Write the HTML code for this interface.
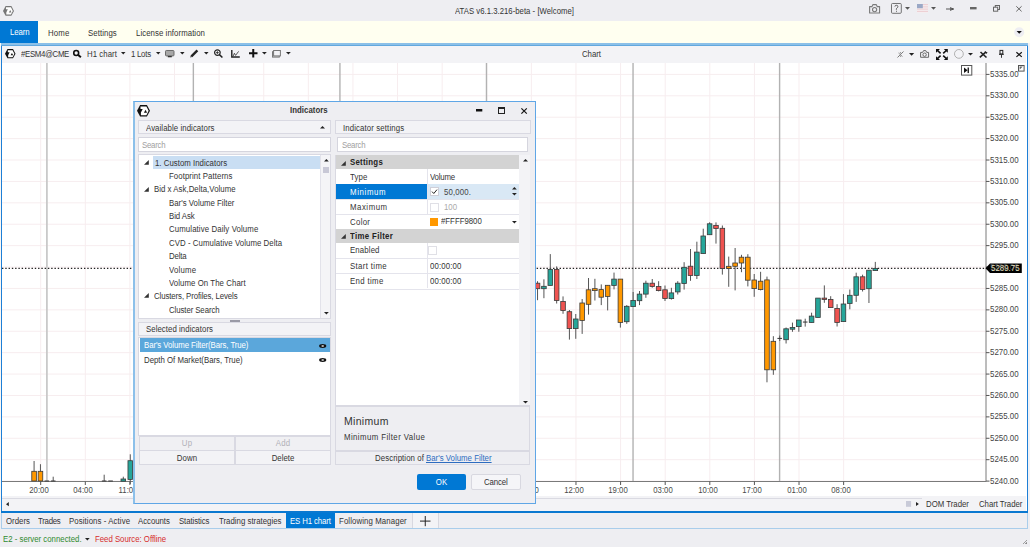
<!DOCTYPE html>
<html><head><meta charset="utf-8">
<style>
*{margin:0;padding:0;box-sizing:border-box}
html,body{width:1030px;height:547px;overflow:hidden;background:#EEEEF2;font-family:"Liberation Sans",sans-serif;font-size:8.5px;color:#333}
.a{position:absolute;white-space:nowrap}
svg.a{overflow:visible}
</style></head><body>
<div class="a" style="left:0px;top:0px;width:1030px;height:21px;background:#EEEEF2;"></div>
<div class="a" style="left:0px;top:21px;width:1030px;height:22px;background:#FFFFF0;"></div>
<div class="a" style="left:0px;top:21px;width:38px;height:22px;background:#0078D4;"></div>
<div class="a" style="left:0px;top:43px;width:1030px;height:470px;background:#FAF7F4;"></div>
<div class="a" style="left:1px;top:43px;width:1027px;height:1.5px;background:#8CC0E8;"></div>
<div class="a" style="left:1px;top:44.5px;width:1027px;height:1.5px;background:#62A8DE;"></div>
<div class="a" style="left:1028px;top:43px;width:2px;height:470px;background:#F2F2F5;"></div>
<div class="a" style="left:1px;top:46px;width:1027px;height:467px;background:#fff;border-left:1px solid #1E7FD6;border-right:1px solid #1E7FD6;"></div>
<div class="a" style="left:2px;top:46px;width:1024px;height:17px;background:#F3F3F6;"></div>
<svg class="a" style="left:0;top:0" width="1030" height="547" viewBox="0 0 1030 547"><line x1="2" y1="74.40" x2="986" y2="74.40" stroke="#F7EDEF" stroke-width="1"/><line x1="2" y1="95.81" x2="986" y2="95.81" stroke="#F7EDEF" stroke-width="1"/><line x1="2" y1="117.21" x2="986" y2="117.21" stroke="#F7EDEF" stroke-width="1"/><line x1="2" y1="138.62" x2="986" y2="138.62" stroke="#F7EDEF" stroke-width="1"/><line x1="2" y1="160.02" x2="986" y2="160.02" stroke="#F7EDEF" stroke-width="1"/><line x1="2" y1="181.43" x2="986" y2="181.43" stroke="#F7EDEF" stroke-width="1"/><line x1="2" y1="202.83" x2="986" y2="202.83" stroke="#F7EDEF" stroke-width="1"/><line x1="2" y1="224.24" x2="986" y2="224.24" stroke="#F7EDEF" stroke-width="1"/><line x1="2" y1="245.64" x2="986" y2="245.64" stroke="#F7EDEF" stroke-width="1"/><line x1="2" y1="267.05" x2="986" y2="267.05" stroke="#F7EDEF" stroke-width="1"/><line x1="2" y1="288.45" x2="986" y2="288.45" stroke="#F7EDEF" stroke-width="1"/><line x1="2" y1="309.86" x2="986" y2="309.86" stroke="#F7EDEF" stroke-width="1"/><line x1="2" y1="331.26" x2="986" y2="331.26" stroke="#F7EDEF" stroke-width="1"/><line x1="2" y1="352.66" x2="986" y2="352.66" stroke="#F7EDEF" stroke-width="1"/><line x1="2" y1="374.07" x2="986" y2="374.07" stroke="#F7EDEF" stroke-width="1"/><line x1="2" y1="395.48" x2="986" y2="395.48" stroke="#F7EDEF" stroke-width="1"/><line x1="2" y1="416.88" x2="986" y2="416.88" stroke="#F7EDEF" stroke-width="1"/><line x1="2" y1="438.28" x2="986" y2="438.28" stroke="#F7EDEF" stroke-width="1"/><line x1="2" y1="459.69" x2="986" y2="459.69" stroke="#F7EDEF" stroke-width="1"/><line x1="2" y1="481.10" x2="986" y2="481.10" stroke="#F7EDEF" stroke-width="1"/><line x1="40.70" y1="63" x2="40.70" y2="481.5" stroke="#F7EDEF" stroke-width="1"/><line x1="85.31" y1="63" x2="85.31" y2="481.5" stroke="#F7EDEF" stroke-width="1"/><line x1="129.91" y1="63" x2="129.91" y2="481.5" stroke="#F7EDEF" stroke-width="1"/><line x1="174.52" y1="63" x2="174.52" y2="481.5" stroke="#F7EDEF" stroke-width="1"/><line x1="219.13" y1="63" x2="219.13" y2="481.5" stroke="#F7EDEF" stroke-width="1"/><line x1="263.74" y1="63" x2="263.74" y2="481.5" stroke="#F7EDEF" stroke-width="1"/><line x1="308.34" y1="63" x2="308.34" y2="481.5" stroke="#F7EDEF" stroke-width="1"/><line x1="352.95" y1="63" x2="352.95" y2="481.5" stroke="#F7EDEF" stroke-width="1"/><line x1="397.56" y1="63" x2="397.56" y2="481.5" stroke="#F7EDEF" stroke-width="1"/><line x1="442.16" y1="63" x2="442.16" y2="481.5" stroke="#F7EDEF" stroke-width="1"/><line x1="486.77" y1="63" x2="486.77" y2="481.5" stroke="#F7EDEF" stroke-width="1"/><line x1="531.38" y1="63" x2="531.38" y2="481.5" stroke="#F7EDEF" stroke-width="1"/><line x1="575.98" y1="63" x2="575.98" y2="481.5" stroke="#F7EDEF" stroke-width="1"/><line x1="620.59" y1="63" x2="620.59" y2="481.5" stroke="#F7EDEF" stroke-width="1"/><line x1="665.20" y1="63" x2="665.20" y2="481.5" stroke="#F7EDEF" stroke-width="1"/><line x1="709.81" y1="63" x2="709.81" y2="481.5" stroke="#F7EDEF" stroke-width="1"/><line x1="754.41" y1="63" x2="754.41" y2="481.5" stroke="#F7EDEF" stroke-width="1"/><line x1="799.02" y1="63" x2="799.02" y2="481.5" stroke="#F7EDEF" stroke-width="1"/><line x1="843.63" y1="63" x2="843.63" y2="481.5" stroke="#F7EDEF" stroke-width="1"/><line x1="46.90" y1="63" x2="46.90" y2="481.5" stroke="#C9C9C9" stroke-width="1.8"/><line x1="193.36" y1="63" x2="193.36" y2="481.5" stroke="#B2B2B2" stroke-width="1.4"/><line x1="339.92" y1="63" x2="339.92" y2="481.5" stroke="#B2B2B2" stroke-width="1.4"/><line x1="486.48" y1="63" x2="486.48" y2="481.5" stroke="#B2B2B2" stroke-width="1.4"/><line x1="633.04" y1="63" x2="633.04" y2="481.5" stroke="#B2B2B2" stroke-width="1.4"/><line x1="779.60" y1="63" x2="779.60" y2="481.5" stroke="#B2B2B2" stroke-width="1.4"/><line x1="2" y1="481.5" x2="986" y2="481.5" stroke="#7A7A7A" stroke-width="1"/><line x1="986" y1="63" x2="986" y2="481.5" stroke="#7A7A7A" stroke-width="1"/><line x1="40.70" y1="481.5" x2="40.70" y2="485" stroke="#555" stroke-width="1"/><line x1="85.31" y1="481.5" x2="85.31" y2="485" stroke="#555" stroke-width="1"/><line x1="129.91" y1="481.5" x2="129.91" y2="485" stroke="#555" stroke-width="1"/><line x1="174.52" y1="481.5" x2="174.52" y2="485" stroke="#555" stroke-width="1"/><line x1="219.13" y1="481.5" x2="219.13" y2="485" stroke="#555" stroke-width="1"/><line x1="263.74" y1="481.5" x2="263.74" y2="485" stroke="#555" stroke-width="1"/><line x1="308.34" y1="481.5" x2="308.34" y2="485" stroke="#555" stroke-width="1"/><line x1="352.95" y1="481.5" x2="352.95" y2="485" stroke="#555" stroke-width="1"/><line x1="397.56" y1="481.5" x2="397.56" y2="485" stroke="#555" stroke-width="1"/><line x1="442.16" y1="481.5" x2="442.16" y2="485" stroke="#555" stroke-width="1"/><line x1="486.77" y1="481.5" x2="486.77" y2="485" stroke="#555" stroke-width="1"/><line x1="531.38" y1="481.5" x2="531.38" y2="485" stroke="#555" stroke-width="1"/><line x1="575.98" y1="481.5" x2="575.98" y2="485" stroke="#555" stroke-width="1"/><line x1="620.59" y1="481.5" x2="620.59" y2="485" stroke="#555" stroke-width="1"/><line x1="665.20" y1="481.5" x2="665.20" y2="485" stroke="#555" stroke-width="1"/><line x1="709.81" y1="481.5" x2="709.81" y2="485" stroke="#555" stroke-width="1"/><line x1="754.41" y1="481.5" x2="754.41" y2="485" stroke="#555" stroke-width="1"/><line x1="799.02" y1="481.5" x2="799.02" y2="485" stroke="#555" stroke-width="1"/><line x1="843.63" y1="481.5" x2="843.63" y2="485" stroke="#555" stroke-width="1"/><line x1="986" y1="74.40" x2="989.5" y2="74.40" stroke="#555" stroke-width="1"/><line x1="986" y1="95.81" x2="989.5" y2="95.81" stroke="#555" stroke-width="1"/><line x1="986" y1="117.21" x2="989.5" y2="117.21" stroke="#555" stroke-width="1"/><line x1="986" y1="138.62" x2="989.5" y2="138.62" stroke="#555" stroke-width="1"/><line x1="986" y1="160.02" x2="989.5" y2="160.02" stroke="#555" stroke-width="1"/><line x1="986" y1="181.43" x2="989.5" y2="181.43" stroke="#555" stroke-width="1"/><line x1="986" y1="202.83" x2="989.5" y2="202.83" stroke="#555" stroke-width="1"/><line x1="986" y1="224.24" x2="989.5" y2="224.24" stroke="#555" stroke-width="1"/><line x1="986" y1="245.64" x2="989.5" y2="245.64" stroke="#555" stroke-width="1"/><line x1="986" y1="267.05" x2="989.5" y2="267.05" stroke="#555" stroke-width="1"/><line x1="986" y1="288.45" x2="989.5" y2="288.45" stroke="#555" stroke-width="1"/><line x1="986" y1="309.86" x2="989.5" y2="309.86" stroke="#555" stroke-width="1"/><line x1="986" y1="331.26" x2="989.5" y2="331.26" stroke="#555" stroke-width="1"/><line x1="986" y1="352.66" x2="989.5" y2="352.66" stroke="#555" stroke-width="1"/><line x1="986" y1="374.07" x2="989.5" y2="374.07" stroke="#555" stroke-width="1"/><line x1="986" y1="395.48" x2="989.5" y2="395.48" stroke="#555" stroke-width="1"/><line x1="986" y1="416.88" x2="989.5" y2="416.88" stroke="#555" stroke-width="1"/><line x1="986" y1="438.28" x2="989.5" y2="438.28" stroke="#555" stroke-width="1"/><line x1="986" y1="459.69" x2="989.5" y2="459.69" stroke="#555" stroke-width="1"/><line x1="986" y1="481.10" x2="989.5" y2="481.10" stroke="#555" stroke-width="1"/><line x1="2" y1="268.3" x2="986" y2="268.3" stroke="#222" stroke-width="1.3" stroke-dasharray="1.4 1.88"/><line x1="34.08" y1="461" x2="34.08" y2="481" stroke="#555" stroke-width="1"/><rect x="31.78" y="471.3" width="4.6" height="9.70" fill="#FF9800" stroke="#3a3a3a" stroke-width="0.8"/><line x1="40.45" y1="464.2" x2="40.45" y2="481" stroke="#555" stroke-width="1"/><rect x="38.15" y="471.3" width="4.6" height="9.70" fill="#FF9800" stroke="#3a3a3a" stroke-width="0.8"/><line x1="46.82" y1="481" x2="46.82" y2="481" stroke="#555" stroke-width="1"/><line x1="44.52" y1="481.00" x2="49.12" y2="481.00" stroke="#333" stroke-width="1"/><line x1="53.20" y1="476.7" x2="53.20" y2="481" stroke="#555" stroke-width="1"/><line x1="50.90" y1="481.00" x2="55.50" y2="481.00" stroke="#333" stroke-width="1"/><line x1="104.18" y1="474.7" x2="104.18" y2="481" stroke="#555" stroke-width="1"/><line x1="101.88" y1="481.00" x2="106.48" y2="481.00" stroke="#333" stroke-width="1"/><line x1="110.55" y1="481" x2="110.55" y2="481" stroke="#555" stroke-width="1"/><line x1="108.25" y1="481.00" x2="112.85" y2="481.00" stroke="#333" stroke-width="1"/><line x1="123.30" y1="476.7" x2="123.30" y2="481" stroke="#555" stroke-width="1"/><rect x="121.00" y="479" width="4.6" height="2.20" fill="#26A69A" stroke="#3a3a3a" stroke-width="0.8"/><line x1="130.27" y1="454.3" x2="130.27" y2="484" stroke="#555" stroke-width="1"/><rect x="127.97" y="460.7" width="4.6" height="18.70" fill="#26A69A" stroke="#3a3a3a" stroke-width="0.8"/><line x1="537.54" y1="281.2" x2="537.54" y2="300.2" stroke="#555" stroke-width="1"/><rect x="535.24" y="283.2" width="4.6" height="5.50" fill="#EF5350" stroke="#3a3a3a" stroke-width="0.8"/><line x1="543.92" y1="279.3" x2="543.92" y2="298.2" stroke="#555" stroke-width="1"/><rect x="541.62" y="286.3" width="4.6" height="2.40" fill="#26A69A" stroke="#3a3a3a" stroke-width="0.8"/><line x1="550.29" y1="254.1" x2="550.29" y2="285.4" stroke="#555" stroke-width="1"/><rect x="547.99" y="269.4" width="4.6" height="16.00" fill="#26A69A" stroke="#3a3a3a" stroke-width="0.8"/><line x1="556.66" y1="266.4" x2="556.66" y2="303.5" stroke="#555" stroke-width="1"/><rect x="554.36" y="269.4" width="4.6" height="31.10" fill="#EF5350" stroke="#3a3a3a" stroke-width="0.8"/><line x1="563.04" y1="296.4" x2="563.04" y2="313.8" stroke="#555" stroke-width="1"/><rect x="560.74" y="301.5" width="4.6" height="9.00" fill="#EF5350" stroke="#3a3a3a" stroke-width="0.8"/><line x1="569.41" y1="310" x2="569.41" y2="339.6" stroke="#555" stroke-width="1"/><rect x="567.11" y="311.7" width="4.6" height="16.90" fill="#EF5350" stroke="#3a3a3a" stroke-width="0.8"/><line x1="575.78" y1="314" x2="575.78" y2="338.8" stroke="#555" stroke-width="1"/><rect x="573.48" y="319" width="4.6" height="9.60" fill="#26A69A" stroke="#3a3a3a" stroke-width="0.8"/><line x1="582.16" y1="299" x2="582.16" y2="333.9" stroke="#555" stroke-width="1"/><rect x="579.86" y="303" width="4.6" height="17.40" fill="#FF9800" stroke="#3a3a3a" stroke-width="0.8"/><line x1="588.53" y1="278" x2="588.53" y2="314.6" stroke="#555" stroke-width="1"/><rect x="586.23" y="289.8" width="4.6" height="14.50" fill="#FF9800" stroke="#3a3a3a" stroke-width="0.8"/><line x1="594.90" y1="278.8" x2="594.90" y2="300.5" stroke="#555" stroke-width="1"/><rect x="592.60" y="288.7" width="4.6" height="1.90" fill="#FF9800" stroke="#3a3a3a" stroke-width="0.8"/><line x1="601.27" y1="284.4" x2="601.27" y2="305.1" stroke="#555" stroke-width="1"/><rect x="598.97" y="289.6" width="4.6" height="7.60" fill="#FF9800" stroke="#3a3a3a" stroke-width="0.8"/><line x1="607.65" y1="285.2" x2="607.65" y2="310.4" stroke="#555" stroke-width="1"/><rect x="605.35" y="285.3" width="4.6" height="11.10" fill="#FF9800" stroke="#3a3a3a" stroke-width="0.8"/><line x1="614.02" y1="272.6" x2="614.02" y2="289.4" stroke="#555" stroke-width="1"/><rect x="611.72" y="279.1" width="4.6" height="6.30" fill="#26A69A" stroke="#3a3a3a" stroke-width="0.8"/><line x1="620.39" y1="279.1" x2="620.39" y2="327.6" stroke="#555" stroke-width="1"/><rect x="618.09" y="279.1" width="4.6" height="43.30" fill="#FF9800" stroke="#3a3a3a" stroke-width="0.8"/><line x1="626.77" y1="305.1" x2="626.77" y2="323.8" stroke="#555" stroke-width="1"/><rect x="624.47" y="306.3" width="4.6" height="15.40" fill="#26A69A" stroke="#3a3a3a" stroke-width="0.8"/><line x1="633.14" y1="292" x2="633.14" y2="306.6" stroke="#555" stroke-width="1"/><rect x="630.84" y="300.4" width="4.6" height="6.20" fill="#26A69A" stroke="#3a3a3a" stroke-width="0.8"/><line x1="639.51" y1="291" x2="639.51" y2="305.1" stroke="#555" stroke-width="1"/><rect x="637.21" y="294.1" width="4.6" height="6.60" fill="#26A69A" stroke="#3a3a3a" stroke-width="0.8"/><line x1="645.89" y1="280.7" x2="645.89" y2="297.8" stroke="#555" stroke-width="1"/><rect x="643.59" y="283.2" width="4.6" height="10.90" fill="#26A69A" stroke="#3a3a3a" stroke-width="0.8"/><line x1="652.26" y1="279" x2="652.26" y2="287.7" stroke="#555" stroke-width="1"/><rect x="649.96" y="283.2" width="4.6" height="3.30" fill="#EF5350" stroke="#3a3a3a" stroke-width="0.8"/><line x1="658.63" y1="281.2" x2="658.63" y2="291.4" stroke="#555" stroke-width="1"/><rect x="656.33" y="286.5" width="4.6" height="4.10" fill="#EF5350" stroke="#3a3a3a" stroke-width="0.8"/><line x1="665.00" y1="285.5" x2="665.00" y2="301" stroke="#555" stroke-width="1"/><rect x="662.70" y="289.8" width="4.6" height="8.80" fill="#EF5350" stroke="#3a3a3a" stroke-width="0.8"/><line x1="671.38" y1="287.8" x2="671.38" y2="299.6" stroke="#555" stroke-width="1"/><rect x="669.08" y="292.9" width="4.6" height="5.70" fill="#26A69A" stroke="#3a3a3a" stroke-width="0.8"/><line x1="677.75" y1="281.2" x2="677.75" y2="294.5" stroke="#555" stroke-width="1"/><rect x="675.45" y="283.2" width="4.6" height="8.70" fill="#26A69A" stroke="#3a3a3a" stroke-width="0.8"/><line x1="684.12" y1="262.2" x2="684.12" y2="289.6" stroke="#555" stroke-width="1"/><rect x="681.82" y="267.3" width="4.6" height="16.20" fill="#26A69A" stroke="#3a3a3a" stroke-width="0.8"/><line x1="690.50" y1="249" x2="690.50" y2="280.8" stroke="#555" stroke-width="1"/><rect x="688.20" y="266.2" width="4.6" height="9.30" fill="#EF5350" stroke="#3a3a3a" stroke-width="0.8"/><line x1="696.87" y1="241.7" x2="696.87" y2="279" stroke="#555" stroke-width="1"/><rect x="694.57" y="252.1" width="4.6" height="23.40" fill="#26A69A" stroke="#3a3a3a" stroke-width="0.8"/><line x1="703.24" y1="228.7" x2="703.24" y2="253.6" stroke="#555" stroke-width="1"/><rect x="700.94" y="236" width="4.6" height="17.60" fill="#26A69A" stroke="#3a3a3a" stroke-width="0.8"/><line x1="709.62" y1="222.3" x2="709.62" y2="234.7" stroke="#555" stroke-width="1"/><rect x="707.32" y="223.8" width="4.6" height="10.90" fill="#26A69A" stroke="#3a3a3a" stroke-width="0.8"/><line x1="715.99" y1="222.4" x2="715.99" y2="243.6" stroke="#555" stroke-width="1"/><rect x="713.69" y="225.5" width="4.6" height="3.00" fill="#EF5350" stroke="#3a3a3a" stroke-width="0.8"/><line x1="722.36" y1="225.5" x2="722.36" y2="274.6" stroke="#555" stroke-width="1"/><rect x="720.06" y="228.3" width="4.6" height="40.20" fill="#EF5350" stroke="#3a3a3a" stroke-width="0.8"/><line x1="728.73" y1="256.6" x2="728.73" y2="286.8" stroke="#555" stroke-width="1"/><rect x="726.43" y="266.3" width="4.6" height="2.20" fill="#FF9800" stroke="#3a3a3a" stroke-width="0.8"/><line x1="735.11" y1="248" x2="735.11" y2="290.4" stroke="#555" stroke-width="1"/><rect x="732.81" y="263" width="4.6" height="3.30" fill="#FF9800" stroke="#3a3a3a" stroke-width="0.8"/><line x1="741.48" y1="254.8" x2="741.48" y2="272.2" stroke="#555" stroke-width="1"/><rect x="739.18" y="257.2" width="4.6" height="5.80" fill="#FF9800" stroke="#3a3a3a" stroke-width="0.8"/><line x1="747.85" y1="254.2" x2="747.85" y2="286.4" stroke="#555" stroke-width="1"/><rect x="745.55" y="257.2" width="4.6" height="23.00" fill="#FF9800" stroke="#3a3a3a" stroke-width="0.8"/><line x1="754.23" y1="274" x2="754.23" y2="296.8" stroke="#555" stroke-width="1"/><rect x="751.93" y="280" width="4.6" height="8.60" fill="#FF9800" stroke="#3a3a3a" stroke-width="0.8"/><line x1="760.60" y1="271.8" x2="760.60" y2="290.4" stroke="#555" stroke-width="1"/><rect x="758.30" y="281.2" width="4.6" height="8.40" fill="#FF9800" stroke="#3a3a3a" stroke-width="0.8"/><line x1="766.97" y1="276.6" x2="766.97" y2="382.3" stroke="#555" stroke-width="1"/><rect x="764.67" y="279.9" width="4.6" height="89.90" fill="#FF9800" stroke="#3a3a3a" stroke-width="0.8"/><line x1="773.35" y1="336.2" x2="773.35" y2="374.8" stroke="#555" stroke-width="1"/><rect x="771.05" y="341.3" width="4.6" height="28.50" fill="#FF9800" stroke="#3a3a3a" stroke-width="0.8"/><line x1="779.72" y1="335.5" x2="779.72" y2="341" stroke="#555" stroke-width="1"/><line x1="777.42" y1="338.40" x2="782.02" y2="338.40" stroke="#333" stroke-width="1"/><line x1="786.09" y1="327.5" x2="786.09" y2="343.5" stroke="#555" stroke-width="1"/><rect x="783.79" y="328.8" width="4.6" height="10.90" fill="#26A69A" stroke="#3a3a3a" stroke-width="0.8"/><line x1="792.46" y1="322.6" x2="792.46" y2="331.8" stroke="#555" stroke-width="1"/><rect x="790.16" y="327.5" width="4.6" height="1.70" fill="#26A69A" stroke="#3a3a3a" stroke-width="0.8"/><line x1="798.84" y1="320" x2="798.84" y2="331.8" stroke="#555" stroke-width="1"/><rect x="796.54" y="320" width="4.6" height="6.60" fill="#26A69A" stroke="#3a3a3a" stroke-width="0.8"/><line x1="805.21" y1="318.7" x2="805.21" y2="326.6" stroke="#555" stroke-width="1"/><line x1="802.91" y1="322.05" x2="807.51" y2="322.05" stroke="#333" stroke-width="1"/><line x1="811.58" y1="312.7" x2="811.58" y2="322.5" stroke="#555" stroke-width="1"/><rect x="809.28" y="316.1" width="4.6" height="6.40" fill="#26A69A" stroke="#3a3a3a" stroke-width="0.8"/><line x1="817.96" y1="298.1" x2="817.96" y2="317.4" stroke="#555" stroke-width="1"/><rect x="815.66" y="298.1" width="4.6" height="19.30" fill="#26A69A" stroke="#3a3a3a" stroke-width="0.8"/><line x1="824.33" y1="285.4" x2="824.33" y2="302.8" stroke="#555" stroke-width="1"/><rect x="822.03" y="298.1" width="4.6" height="1.30" fill="#EF5350" stroke="#3a3a3a" stroke-width="0.8"/><line x1="830.70" y1="296.2" x2="830.70" y2="307.6" stroke="#555" stroke-width="1"/><rect x="828.40" y="299.4" width="4.6" height="8.20" fill="#EF5350" stroke="#3a3a3a" stroke-width="0.8"/><line x1="837.08" y1="304.2" x2="837.08" y2="326.5" stroke="#555" stroke-width="1"/><rect x="834.78" y="308.4" width="4.6" height="14.00" fill="#EF5350" stroke="#3a3a3a" stroke-width="0.8"/><line x1="843.45" y1="294.1" x2="843.45" y2="321.6" stroke="#555" stroke-width="1"/><rect x="841.15" y="304" width="4.6" height="17.60" fill="#26A69A" stroke="#3a3a3a" stroke-width="0.8"/><line x1="849.82" y1="289.5" x2="849.82" y2="309.3" stroke="#555" stroke-width="1"/><rect x="847.52" y="295.3" width="4.6" height="8.20" fill="#26A69A" stroke="#3a3a3a" stroke-width="0.8"/><line x1="856.19" y1="272.7" x2="856.19" y2="301.9" stroke="#555" stroke-width="1"/><rect x="853.89" y="276.8" width="4.6" height="18.50" fill="#26A69A" stroke="#3a3a3a" stroke-width="0.8"/><line x1="862.57" y1="274.7" x2="862.57" y2="291.5" stroke="#555" stroke-width="1"/><rect x="860.27" y="276.8" width="4.6" height="12.70" fill="#EF5350" stroke="#3a3a3a" stroke-width="0.8"/><line x1="868.94" y1="270.2" x2="868.94" y2="303" stroke="#555" stroke-width="1"/><rect x="866.64" y="270.2" width="4.6" height="18.50" fill="#26A69A" stroke="#3a3a3a" stroke-width="0.8"/><line x1="875.31" y1="261.9" x2="875.31" y2="270.6" stroke="#555" stroke-width="1"/><rect x="873.01" y="268.4" width="4.6" height="2.20" fill="#26A69A" stroke="#3a3a3a" stroke-width="0.8"/><path d="M985.5 268.2 L990 263.6 H1021.8 V272.9 H990 Z" fill="#000"/></svg>
<div class="a" style="left:2px;top:495.5px;width:1024px;height:15.5px;background:#F3F3F6;"></div>
<div class="a" style="left:2px;top:498px;width:920px;height:1px;background:#DADAE2;"></div>
<div class="a" style="left:1px;top:511px;width:1027px;height:2px;background:#0A78D0;"></div>
<div class="a" style="left:1px;top:513px;width:1027px;height:16px;background:#EEEEF2;border-left:1px solid #A9CDEB;border-right:1px solid #A9CDEB;border-bottom:1.5px solid #A9CDEB;"></div>
<div class="a" style="left:286px;top:513px;width:49px;height:15px;background:#0078D4;"></div>
<div class="a" style="left:412px;top:513px;width:27px;height:15px;background:#F3F3F6;border-left:1px solid #D8D8E0;border-right:1px solid #D8D8E0;"></div>
<div class="a" style="left:0px;top:529px;width:1030px;height:18px;background:#EEEEF2;"></div>
<div class="a" style="left:455.30px;top:6.99px;font-size:8.4px;line-height:8.4px;letter-spacing:0.042px;color:#333;transform:scaleX(0.92);transform-origin:0 0;">ATAS v6.1.3.216-beta - [Welcome]</div>
<div class="a" style="left:9.60px;top:27.70px;font-size:8.5px;line-height:8.5px;letter-spacing:-0.133px;color:#fff;transform:scaleX(0.92);transform-origin:0 0;">Learn</div>
<div class="a" style="left:48.00px;top:28.80px;font-size:8.5px;line-height:8.5px;letter-spacing:0.143px;color:#333;transform:scaleX(0.92);transform-origin:0 0;">Home</div>
<div class="a" style="left:87.90px;top:28.80px;font-size:8.5px;line-height:8.5px;letter-spacing:0.073px;color:#333;transform:scaleX(0.92);transform-origin:0 0;">Settings</div>
<div class="a" style="left:135.60px;top:28.80px;font-size:8.5px;line-height:8.5px;letter-spacing:0.067px;color:#333;transform:scaleX(0.92);transform-origin:0 0;">License information</div>
<div class="a" style="left:21.10px;top:49.90px;font-size:8.5px;line-height:8.5px;letter-spacing:-0.359px;color:#333;transform:scaleX(0.92);transform-origin:0 0;">#ESM4@CME</div>
<div class="a" style="left:86.60px;top:49.90px;font-size:8.5px;line-height:8.5px;letter-spacing:0.060px;color:#333;transform:scaleX(0.92);transform-origin:0 0;">H1 chart</div>
<div class="a" style="left:131.00px;top:49.90px;font-size:8.5px;line-height:8.5px;letter-spacing:-0.272px;color:#333;transform:scaleX(0.92);transform-origin:0 0;">1 Lots</div>
<div class="a" style="left:582.00px;top:49.90px;font-size:8.5px;line-height:8.5px;letter-spacing:-0.051px;color:#333;transform:scaleX(0.92);transform-origin:0 0;">Chart</div>
<div class="a" style="left:989.60px;top:69.98px;font-size:9px;line-height:9px;letter-spacing:0.000px;color:#444;transform:scaleX(0.88);transform-origin:0 0;">5335.00</div>
<div class="a" style="left:989.60px;top:91.39px;font-size:9px;line-height:9px;letter-spacing:0.000px;color:#444;transform:scaleX(0.88);transform-origin:0 0;">5330.00</div>
<div class="a" style="left:989.60px;top:112.79px;font-size:9px;line-height:9px;letter-spacing:0.000px;color:#444;transform:scaleX(0.88);transform-origin:0 0;">5325.00</div>
<div class="a" style="left:989.60px;top:134.20px;font-size:9px;line-height:9px;letter-spacing:0.000px;color:#444;transform:scaleX(0.88);transform-origin:0 0;">5320.00</div>
<div class="a" style="left:989.60px;top:155.60px;font-size:9px;line-height:9px;letter-spacing:0.000px;color:#444;transform:scaleX(0.88);transform-origin:0 0;">5315.00</div>
<div class="a" style="left:989.60px;top:177.01px;font-size:9px;line-height:9px;letter-spacing:0.000px;color:#444;transform:scaleX(0.88);transform-origin:0 0;">5310.00</div>
<div class="a" style="left:989.60px;top:198.41px;font-size:9px;line-height:9px;letter-spacing:0.000px;color:#444;transform:scaleX(0.88);transform-origin:0 0;">5305.00</div>
<div class="a" style="left:989.60px;top:219.82px;font-size:9px;line-height:9px;letter-spacing:0.000px;color:#444;transform:scaleX(0.88);transform-origin:0 0;">5300.00</div>
<div class="a" style="left:989.60px;top:241.22px;font-size:9px;line-height:9px;letter-spacing:0.000px;color:#444;transform:scaleX(0.88);transform-origin:0 0;">5295.00</div>
<div class="a" style="left:989.60px;top:262.63px;font-size:9px;line-height:9px;letter-spacing:0.000px;color:#444;transform:scaleX(0.88);transform-origin:0 0;">5290.00</div>
<div class="a" style="left:989.60px;top:284.03px;font-size:9px;line-height:9px;letter-spacing:0.000px;color:#444;transform:scaleX(0.88);transform-origin:0 0;">5285.00</div>
<div class="a" style="left:989.60px;top:305.44px;font-size:9px;line-height:9px;letter-spacing:0.000px;color:#444;transform:scaleX(0.88);transform-origin:0 0;">5280.00</div>
<div class="a" style="left:989.60px;top:326.84px;font-size:9px;line-height:9px;letter-spacing:0.000px;color:#444;transform:scaleX(0.88);transform-origin:0 0;">5275.00</div>
<div class="a" style="left:989.60px;top:348.25px;font-size:9px;line-height:9px;letter-spacing:0.000px;color:#444;transform:scaleX(0.88);transform-origin:0 0;">5270.00</div>
<div class="a" style="left:989.60px;top:369.65px;font-size:9px;line-height:9px;letter-spacing:0.000px;color:#444;transform:scaleX(0.88);transform-origin:0 0;">5265.00</div>
<div class="a" style="left:989.60px;top:391.06px;font-size:9px;line-height:9px;letter-spacing:0.000px;color:#444;transform:scaleX(0.88);transform-origin:0 0;">5260.00</div>
<div class="a" style="left:989.60px;top:412.46px;font-size:9px;line-height:9px;letter-spacing:0.000px;color:#444;transform:scaleX(0.88);transform-origin:0 0;">5255.00</div>
<div class="a" style="left:989.60px;top:433.87px;font-size:9px;line-height:9px;letter-spacing:0.000px;color:#444;transform:scaleX(0.88);transform-origin:0 0;">5250.00</div>
<div class="a" style="left:989.60px;top:455.27px;font-size:9px;line-height:9px;letter-spacing:0.000px;color:#444;transform:scaleX(0.88);transform-origin:0 0;">5245.00</div>
<div class="a" style="left:989.60px;top:476.68px;font-size:9px;line-height:9px;letter-spacing:0.000px;color:#444;transform:scaleX(0.88);transform-origin:0 0;">5240.00</div>
<div class="a" style="left:991.20px;top:263.88px;font-size:9px;line-height:9px;letter-spacing:0.000px;color:#E8E4C4;transform:scaleX(0.88);transform-origin:0 0;">5289.75</div>
<div class="a" style="left:18.55px;top:485.58px;font-size:9px;line-height:9px;letter-spacing:0.000px;color:#4a4a4a;width:40px;text-align:center;transform:scaleX(0.86);">20:00</div>
<div class="a" style="left:63.16px;top:485.58px;font-size:9px;line-height:9px;letter-spacing:0.000px;color:#4a4a4a;width:40px;text-align:center;transform:scaleX(0.86);">04:00</div>
<div class="a" style="left:107.76px;top:485.58px;font-size:9px;line-height:9px;letter-spacing:0.000px;color:#4a4a4a;width:40px;text-align:center;transform:scaleX(0.86);">11:00</div>
<div class="a" style="left:553.83px;top:485.58px;font-size:9px;line-height:9px;letter-spacing:0.000px;color:#4a4a4a;width:40px;text-align:center;transform:scaleX(0.86);">12:00</div>
<div class="a" style="left:598.44px;top:485.58px;font-size:9px;line-height:9px;letter-spacing:0.000px;color:#4a4a4a;width:40px;text-align:center;transform:scaleX(0.86);">19:00</div>
<div class="a" style="left:643.05px;top:485.58px;font-size:9px;line-height:9px;letter-spacing:0.000px;color:#4a4a4a;width:40px;text-align:center;transform:scaleX(0.86);">03:00</div>
<div class="a" style="left:687.66px;top:485.58px;font-size:9px;line-height:9px;letter-spacing:0.000px;color:#4a4a4a;width:40px;text-align:center;transform:scaleX(0.86);">10:00</div>
<div class="a" style="left:732.26px;top:485.58px;font-size:9px;line-height:9px;letter-spacing:0.000px;color:#4a4a4a;width:40px;text-align:center;transform:scaleX(0.86);">17:00</div>
<div class="a" style="left:776.87px;top:485.58px;font-size:9px;line-height:9px;letter-spacing:0.000px;color:#4a4a4a;width:40px;text-align:center;transform:scaleX(0.86);">01:00</div>
<div class="a" style="left:821.48px;top:485.58px;font-size:9px;line-height:9px;letter-spacing:0.000px;color:#4a4a4a;width:40px;text-align:center;transform:scaleX(0.86);">08:00</div>
<div class="a" style="left:509.15px;top:485.58px;font-size:9px;line-height:9px;letter-spacing:0.000px;color:#4a4a4a;width:40px;text-align:center;transform:scaleX(0.86);">18:00</div>
<div class="a" style="left:925.90px;top:499.50px;font-size:8.5px;line-height:8.5px;letter-spacing:-0.014px;color:#333;transform:scaleX(0.92);transform-origin:0 0;">DOM Trader</div>
<div class="a" style="left:978.70px;top:499.50px;font-size:8.5px;line-height:8.5px;letter-spacing:-0.054px;color:#333;transform:scaleX(0.92);transform-origin:0 0;">Chart Trader</div>
<div class="a" style="left:6.00px;top:517.00px;font-size:8.5px;line-height:8.5px;letter-spacing:0.017px;color:#333;transform:scaleX(0.92);transform-origin:0 0;">Orders</div>
<div class="a" style="left:38.40px;top:517.00px;font-size:8.5px;line-height:8.5px;letter-spacing:-0.281px;color:#333;transform:scaleX(0.92);transform-origin:0 0;">Trades</div>
<div class="a" style="left:68.80px;top:517.00px;font-size:8.5px;line-height:8.5px;letter-spacing:0.093px;color:#333;transform:scaleX(0.92);transform-origin:0 0;">Positions - Active</div>
<div class="a" style="left:138.40px;top:517.00px;font-size:8.5px;line-height:8.5px;letter-spacing:-0.050px;color:#333;transform:scaleX(0.92);transform-origin:0 0;">Accounts</div>
<div class="a" style="left:179.00px;top:517.00px;font-size:8.5px;line-height:8.5px;letter-spacing:-0.108px;color:#333;transform:scaleX(0.92);transform-origin:0 0;">Statistics</div>
<div class="a" style="left:218.60px;top:517.00px;font-size:8.5px;line-height:8.5px;letter-spacing:0.012px;color:#333;transform:scaleX(0.92);transform-origin:0 0;">Trading strategies</div>
<div class="a" style="left:339.10px;top:517.00px;font-size:8.5px;line-height:8.5px;letter-spacing:0.110px;color:#333;transform:scaleX(0.92);transform-origin:0 0;">Following Manager</div>
<div class="a" style="left:289.70px;top:517.00px;font-size:8.5px;line-height:8.5px;letter-spacing:-0.135px;color:#fff;transform:scaleX(0.92);transform-origin:0 0;">ES H1 chart</div>
<div class="a" style="left:2.60px;top:534.50px;font-size:8.5px;line-height:8.5px;letter-spacing:-0.004px;color:#2F8A2F;transform:scaleX(0.92);transform-origin:0 0;">E2 - server connected.</div>
<div class="a" style="left:95.00px;top:534.50px;font-size:8.5px;line-height:8.5px;letter-spacing:-0.021px;color:#D62C2C;transform:scaleX(0.92);transform-origin:0 0;">Feed Source: Offline</div>
<div class="a" style="left:133px;top:101px;width:403px;height:402.8px;background:#EEEEF2;border:1px solid #5FA6E6;border-left:2px solid #8CC0EA;"></div>
<div class="a" style="left:290.00px;top:106.30px;font-size:8.5px;line-height:8.5px;letter-spacing:0.035px;color:#333;font-weight:700;transform:scaleX(0.92);transform-origin:0 0;">Indicators</div>
<div class="a" style="left:138px;top:120px;width:193px;height:14px;background:#F3F3F6;border:1px solid #D9D9E2;"></div>
<div class="a" style="left:146.40px;top:123.50px;font-size:8.5px;line-height:8.5px;letter-spacing:0.074px;color:#333;transform:scaleX(0.92);transform-origin:0 0;">Available indicators</div>
<div class="a" style="left:138px;top:137px;width:193px;height:15px;background:#fff;border:1px solid #D5D5DE;"></div>
<div class="a" style="left:142.20px;top:140.60px;font-size:8.5px;line-height:8.5px;letter-spacing:-0.250px;color:#A0A0A0;transform:scaleX(0.92);transform-origin:0 0;">Search</div>
<div class="a" style="left:138px;top:154px;width:193px;height:164.5px;background:#fff;border:1px solid #D9D9E2;"></div>
<div class="a" style="left:153px;top:155.8px;width:167px;height:13px;background:#C9DEF3;"></div>
<div class="a" style="left:320px;top:155px;width:10px;height:162.5px;background:#F4F4F7;border-left:1px solid #E2E2EA;"></div>
<div class="a" style="left:323.4px;top:167.1px;width:5.8px;height:5.8px;background:#C8C8D6;"></div>
<div class="a" style="left:155.00px;top:158.70px;font-size:8.5px;line-height:8.5px;letter-spacing:0.021px;color:#333;transform:scaleX(0.92);transform-origin:0 0;">1. Custom Indicators</div>
<svg class="a" style="left:144px;top:159.9px" width="5" height="5"><path d="M4.8 0 V4.8 H0 Z" fill="#333"/></svg>
<div class="a" style="left:168.60px;top:172.05px;font-size:8.5px;line-height:8.5px;letter-spacing:0.081px;color:#333;transform:scaleX(0.92);transform-origin:0 0;">Footprint Patterns</div>
<div class="a" style="left:154.40px;top:185.40px;font-size:8.5px;line-height:8.5px;letter-spacing:0.037px;color:#333;transform:scaleX(0.92);transform-origin:0 0;">Bid x Ask,Delta,Volume</div>
<svg class="a" style="left:144px;top:186.6px" width="5" height="5"><path d="M4.8 0 V4.8 H0 Z" fill="#333"/></svg>
<div class="a" style="left:168.60px;top:198.75px;font-size:8.5px;line-height:8.5px;letter-spacing:0.006px;color:#333;transform:scaleX(0.92);transform-origin:0 0;">Bar's Volume Filter</div>
<div class="a" style="left:168.60px;top:212.10px;font-size:8.5px;line-height:8.5px;letter-spacing:-0.061px;color:#333;transform:scaleX(0.92);transform-origin:0 0;">Bid Ask</div>
<div class="a" style="left:168.60px;top:225.45px;font-size:8.5px;line-height:8.5px;letter-spacing:0.117px;color:#333;transform:scaleX(0.92);transform-origin:0 0;">Cumulative Daily Volume</div>
<div class="a" style="left:168.60px;top:238.80px;font-size:8.5px;line-height:8.5px;letter-spacing:0.073px;color:#333;transform:scaleX(0.92);transform-origin:0 0;">CVD - Cumulative Volume Delta</div>
<div class="a" style="left:168.60px;top:252.15px;font-size:8.5px;line-height:8.5px;letter-spacing:-0.164px;color:#333;transform:scaleX(0.92);transform-origin:0 0;">Delta</div>
<div class="a" style="left:168.60px;top:265.50px;font-size:8.5px;line-height:8.5px;letter-spacing:0.201px;color:#333;transform:scaleX(0.92);transform-origin:0 0;">Volume</div>
<div class="a" style="left:168.60px;top:278.85px;font-size:8.5px;line-height:8.5px;letter-spacing:0.069px;color:#333;transform:scaleX(0.92);transform-origin:0 0;">Volume On The Chart</div>
<div class="a" style="left:154.40px;top:292.20px;font-size:8.5px;line-height:8.5px;letter-spacing:-0.107px;color:#333;transform:scaleX(0.92);transform-origin:0 0;">Clusters, Profiles, Levels</div>
<svg class="a" style="left:144px;top:293.4px" width="5" height="5"><path d="M4.8 0 V4.8 H0 Z" fill="#333"/></svg>
<div class="a" style="left:168.60px;top:305.55px;font-size:8.5px;line-height:8.5px;letter-spacing:-0.095px;color:#333;transform:scaleX(0.92);transform-origin:0 0;">Cluster Search</div>
<div class="a" style="left:230px;top:319.6px;width:10px;height:0.8px;background:#9A9AA6;"></div>
<div class="a" style="left:230px;top:320.8px;width:10px;height:0.8px;background:#9A9AA6;"></div>
<div class="a" style="left:138px;top:321.8px;width:193px;height:14.6px;background:#F3F3F6;border:1px solid #D9D9E2;"></div>
<div class="a" style="left:146.20px;top:325.40px;font-size:8.5px;line-height:8.5px;letter-spacing:0.053px;color:#333;transform:scaleX(0.92);transform-origin:0 0;">Selected indicators</div>
<div class="a" style="left:138px;top:336.6px;width:193px;height:99px;background:#fff;border:1px solid #D9D9E2;"></div>
<div class="a" style="left:139.9px;top:338.2px;width:190px;height:13.5px;background:#5BA7DB;"></div>
<div class="a" style="left:143.80px;top:341.20px;font-size:8.5px;line-height:8.5px;letter-spacing:-0.079px;color:#fff;transform:scaleX(0.92);transform-origin:0 0;">Bar's Volume Filter(Bars, True)</div>
<div class="a" style="left:143.80px;top:355.80px;font-size:8.5px;line-height:8.5px;letter-spacing:-0.002px;color:#333;transform:scaleX(0.92);transform-origin:0 0;">Depth Of Market(Bars, True)</div>
<div class="a" style="left:138.5px;top:435.5px;width:96.5px;height:15px;background:#F0F0F3;border:1px solid #D9D9E2;"></div>
<div class="a" style="left:234.5px;top:435.5px;width:96.5px;height:15px;background:#F0F0F3;border:1px solid #D9D9E2;"></div>
<div class="a" style="left:138.5px;top:450px;width:96.5px;height:15px;background:#F3F3F6;border:1px solid #D9D9E2;"></div>
<div class="a" style="left:234.5px;top:450px;width:96.5px;height:15px;background:#F3F3F6;border:1px solid #D9D9E2;"></div>
<div class="a" style="left:138.50px;top:439.00px;font-size:8.5px;line-height:8.5px;letter-spacing:0.160px;color:#B0B0B8;width:96px;text-align:center;transform:scaleX(0.92);transform-origin:50% 0;">Up</div>
<div class="a" style="left:234.50px;top:439.00px;font-size:8.5px;line-height:8.5px;letter-spacing:0.248px;color:#B0B0B8;width:96px;text-align:center;transform:scaleX(0.92);transform-origin:50% 0;">Add</div>
<div class="a" style="left:138.50px;top:453.60px;font-size:8.5px;line-height:8.5px;letter-spacing:0.110px;color:#333;width:96px;text-align:center;transform:scaleX(0.92);transform-origin:50% 0;">Down</div>
<div class="a" style="left:234.50px;top:453.60px;font-size:8.5px;line-height:8.5px;letter-spacing:0.016px;color:#333;width:96px;text-align:center;transform:scaleX(0.92);transform-origin:50% 0;">Delete</div>
<div class="a" style="left:335.4px;top:120px;width:195.3px;height:14.2px;background:#F3F3F6;border:1px solid #D9D9E2;"></div>
<div class="a" style="left:342.60px;top:123.70px;font-size:8.5px;line-height:8.5px;letter-spacing:0.125px;color:#333;transform:scaleX(0.92);transform-origin:0 0;">Indicator settings</div>
<div class="a" style="left:337.4px;top:137.3px;width:191px;height:15px;background:#fff;border:1px solid #D5D5DE;"></div>
<div class="a" style="left:341.50px;top:140.80px;font-size:8.5px;line-height:8.5px;letter-spacing:-0.250px;color:#A0A0A0;transform:scaleX(0.92);transform-origin:0 0;">Search</div>
<div class="a" style="left:335.4px;top:154.8px;width:195px;height:251.6px;background:#fff;border:1px solid #D9D9E2;"></div>
<div class="a" style="left:519.3px;top:155.4px;width:10.7px;height:250px;background:#F3F3F6;"></div>
<div class="a" style="left:336px;top:155.4px;width:183.3px;height:13.3px;background:#D3D3D3;"></div>
<div class="a" style="left:336px;top:228.7px;width:183.3px;height:14px;background:#D3D3D3;"></div>
<div class="a" style="left:336px;top:184px;width:183.3px;height:1px;background:#E4E4EC;"></div>
<div class="a" style="left:336px;top:199.3px;width:183.3px;height:1px;background:#E4E4EC;"></div>
<div class="a" style="left:336px;top:214.3px;width:183.3px;height:1px;background:#E4E4EC;"></div>
<div class="a" style="left:336px;top:258.1px;width:183.3px;height:1px;background:#E4E4EC;"></div>
<div class="a" style="left:336px;top:273.2px;width:183.3px;height:1px;background:#E4E4EC;"></div>
<div class="a" style="left:336px;top:288.5px;width:183.3px;height:1px;background:#E4E4EC;"></div>
<div class="a" style="left:427px;top:169px;width:1px;height:45.3px;background:#E4E4EC;"></div>
<div class="a" style="left:427px;top:242.7px;width:1px;height:45.8px;background:#E4E4EC;"></div>
<div class="a" style="left:336px;top:184px;width:91px;height:15px;background:#0078D4;"></div>
<div class="a" style="left:428px;top:184px;width:91.3px;height:15px;background:#D9E8F5;"></div>
<div class="a" style="left:350.40px;top:157.90px;font-size:8.5px;line-height:8.5px;letter-spacing:0.292px;color:#222;font-weight:700;transform:scaleX(0.92);transform-origin:0 0;">Settings</div>
<div class="a" style="left:350.40px;top:232.00px;font-size:8.5px;line-height:8.5px;letter-spacing:0.375px;color:#222;font-weight:700;transform:scaleX(0.92);transform-origin:0 0;">Time Filter</div>
<svg class="a" style="left:340.7px;top:160.6px" width="5" height="5"><path d="M4.8 0 V4.8 H0 Z" fill="#333"/></svg>
<svg class="a" style="left:340.7px;top:234px" width="5" height="5"><path d="M4.8 0 V4.8 H0 Z" fill="#333"/></svg>
<div class="a" style="left:350.40px;top:172.60px;font-size:8.5px;line-height:8.5px;letter-spacing:0.173px;color:#333;transform:scaleX(0.92);transform-origin:0 0;">Type</div>
<div class="a" style="left:430.40px;top:172.60px;font-size:8.5px;line-height:8.5px;letter-spacing:-0.198px;color:#333;transform:scaleX(0.92);transform-origin:0 0;">Volume</div>
<div class="a" style="left:350.40px;top:187.60px;font-size:8.5px;line-height:8.5px;letter-spacing:0.710px;color:#fff;transform:scaleX(0.92);transform-origin:0 0;">Minimum</div>
<div class="a" style="left:443.60px;top:187.60px;font-size:8.5px;line-height:8.5px;letter-spacing:0.170px;color:#444;transform:scaleX(0.92);transform-origin:0 0;">50,000.</div>
<div class="a" style="left:350.40px;top:202.80px;font-size:8.5px;line-height:8.5px;letter-spacing:0.575px;color:#333;transform:scaleX(0.92);transform-origin:0 0;">Maximum</div>
<div class="a" style="left:443.60px;top:202.80px;font-size:8.5px;line-height:8.5px;letter-spacing:-0.019px;color:#AAA;transform:scaleX(0.92);transform-origin:0 0;">100</div>
<div class="a" style="left:350.40px;top:217.50px;font-size:8.5px;line-height:8.5px;letter-spacing:0.351px;color:#333;transform:scaleX(0.92);transform-origin:0 0;">Color</div>
<div class="a" style="left:441.00px;top:217.30px;font-size:8.5px;line-height:8.5px;letter-spacing:-0.006px;color:#333;transform:scaleX(0.92);transform-origin:0 0;">#FFFF9800</div>
<div class="a" style="left:350.40px;top:246.40px;font-size:8.5px;line-height:8.5px;letter-spacing:0.139px;color:#333;transform:scaleX(0.92);transform-origin:0 0;">Enabled</div>
<div class="a" style="left:350.40px;top:261.70px;font-size:8.5px;line-height:8.5px;letter-spacing:0.384px;color:#333;transform:scaleX(0.92);transform-origin:0 0;">Start time</div>
<div class="a" style="left:430.40px;top:261.80px;font-size:8.5px;line-height:8.5px;letter-spacing:0.157px;color:#333;transform:scaleX(0.92);transform-origin:0 0;">00:00:00</div>
<div class="a" style="left:350.40px;top:277.10px;font-size:8.5px;line-height:8.5px;letter-spacing:0.372px;color:#333;transform:scaleX(0.92);transform-origin:0 0;">End time</div>
<div class="a" style="left:430.40px;top:277.20px;font-size:8.5px;line-height:8.5px;letter-spacing:0.157px;color:#333;transform:scaleX(0.92);transform-origin:0 0;">00:00:00</div>
<div class="a" style="left:430px;top:187.2px;width:8.7px;height:9px;background:#fff;border:1px solid #CFCFD8;"></div>
<svg class="a" style="left:430px;top:187.2px" width="9" height="9"><path d="M2 4.6 L3.8 6.5 L7 2.6" fill="none" stroke="#222" stroke-width="1"/></svg>
<div class="a" style="left:430px;top:202.5px;width:8.7px;height:9px;background:#fff;border:1px solid #E0E0E6;"></div>
<div class="a" style="left:430px;top:217.6px;width:8.3px;height:8.4px;background:#FF9800;"></div>
<div class="a" style="left:427.7px;top:245.8px;width:9.1px;height:9.7px;background:#fff;border:1px solid #E0E0E6;"></div>
<div class="a" style="left:335.3px;top:406.4px;width:194.8px;height:44.6px;background:#EEEEF2;border:1px solid #D9D9E2;"></div>
<div class="a" style="left:343.70px;top:415.65px;font-size:11.4px;line-height:11.4px;letter-spacing:0.341px;color:#333;transform:scaleX(0.92);transform-origin:0 0;">Minimum</div>
<div class="a" style="left:343.70px;top:432.80px;font-size:8.5px;line-height:8.5px;letter-spacing:0.458px;color:#333;transform:scaleX(0.92);transform-origin:0 0;">Minimum Filter Value</div>
<div class="a" style="left:335.3px;top:451px;width:194.8px;height:14.3px;background:#EEEEF2;border:1px solid #D9D9E2;"></div>
<div class="a" style="left:374.60px;top:454.30px;font-size:8.5px;line-height:8.5px;letter-spacing:0.092px;color:#333;transform:scaleX(0.92);transform-origin:0 0;">Description of</div>
<div class="a" style="left:426.30px;top:454.30px;font-size:8.5px;line-height:8.5px;letter-spacing:0.012px;color:#2D6CC0;text-decoration:underline;transform:scaleX(0.92);transform-origin:0 0;">Bar's Volume Filter</div>
<div class="a" style="left:417.2px;top:474.1px;width:49px;height:15.8px;background:#0078D4;border-radius:2px;"></div>
<div class="a" style="left:417.20px;top:478.10px;font-size:8.5px;line-height:8.5px;letter-spacing:0.164px;color:#fff;width:49px;text-align:center;transform:scaleX(0.92);transform-origin:50% 0;">OK</div>
<div class="a" style="left:471.3px;top:473.7px;width:49.6px;height:16.8px;background:#F5F5F8;border:1px solid #D8D8E0;border-radius:2px;"></div>
<div class="a" style="left:471.30px;top:478.10px;font-size:8.5px;line-height:8.5px;letter-spacing:-0.154px;color:#333;width:49.6px;text-align:center;transform:scaleX(0.92);transform-origin:50% 0;">Cancel</div>
<svg class="a" style="left:137px;top:105px" width="13.0" height="11.6" viewBox="0 0 13.0 11.6"><g transform="scale(1.0)"><path d="M3.1 0.1 H9.9 L13 5.8 L9.9 11.5 H3.1 L0 5.8 Z" fill="#111"/><path d="M3.5 1.4 H9.4 L11.6 5.8 L9.4 10.2 H3.9 V7.6 L5.7 3.9 H3.5 Z" fill="#fff"/><path d="M6.9 7.7 H10.1 L8.55 4.8 Z" fill="#111"/></g></svg>
<svg class="a" style="left:476px;top:109.3px" width="6.3" height="2.5" viewBox="0 0 6.3 2.5"><rect width="6.3" height="2.5" fill="#111"/></svg>
<svg class="a" style="left:498px;top:107px" width="7" height="7" viewBox="0 0 7 7"><rect x="0.5" y="0.5" width="6" height="6" fill="none" stroke="#222" stroke-width="1"/><rect x="0" y="0" width="7" height="2" fill="#222"/></svg>
<svg class="a" style="left:521px;top:107.6px" width="6.2" height="6" viewBox="0 0 6.2 6"><path d="M0.4 0.4 L5.8 5.6 M5.8 0.4 L0.4 5.6" stroke="#111" stroke-width="1.2"/></svg>
<svg class="a" style="left:323.9px;top:159.2px" width="4.8" height="2.6" viewBox="0 0 4.8 2.6"><path d="M0 2.6 H4.8 L2.4 0 Z" fill="#222"/></svg>
<svg class="a" style="left:320.4px;top:126px" width="5" height="2.6" viewBox="0 0 5 2.6"><path d="M0 2.6 H5 L2.5 0 Z" fill="#222"/></svg>
<svg class="a" style="left:323.9px;top:312px" width="4.8" height="2.6" viewBox="0 0 4.8 2.6"><path d="M0 0 H4.8 L2.4 2.6 Z" fill="#222"/></svg>
<svg class="a" style="left:319px;top:343.6px" width="7.4" height="4.2" viewBox="0 0 7.4 4.2"><ellipse cx="3.7" cy="2.1" rx="3.6" ry="2" fill="#111"/><ellipse cx="3.7" cy="2.1" rx="1.3" ry="1" fill="#bbb"/></svg>
<svg class="a" style="left:319px;top:357.6px" width="7.4" height="4.2" viewBox="0 0 7.4 4.2"><ellipse cx="3.7" cy="2.1" rx="3.6" ry="2" fill="#111"/><ellipse cx="3.7" cy="2.1" rx="1.3" ry="1" fill="#bbb"/></svg>
<svg class="a" style="left:522.6px;top:159px" width="5" height="2.6" viewBox="0 0 5 2.6"><path d="M0 2.6 H5 L2.5 0 Z" fill="#222"/></svg>
<svg class="a" style="left:511.7px;top:187.2px" width="4.8" height="2.5" viewBox="0 0 4.8 2.5"><path d="M0 2.5 H4.8 L2.4 0 Z" fill="#222"/></svg>
<svg class="a" style="left:511.7px;top:193.1px" width="4.8" height="2.5" viewBox="0 0 4.8 2.5"><path d="M0 0 H4.8 L2.4 2.5 Z" fill="#222"/></svg>
<svg class="a" style="left:511.7px;top:221px" width="4.8" height="2.4" viewBox="0 0 4.8 2.4"><path d="M0 0 H4.8 L2.4 2.4 Z" fill="#222"/></svg>
<svg class="a" style="left:522.6px;top:401px" width="5" height="2.6" viewBox="0 0 5 2.6"><path d="M0 0 H5 L2.5 2.6 Z" fill="#222"/></svg>
<svg class="a" style="left:3.1px;top:5.8px" width="10.985" height="9.802" viewBox="0 0 10.985 9.802"><g transform="scale(0.845)"><path d="M3.1 0.1 H9.9 L13 5.8 L9.9 11.5 H3.1 L0 5.8 Z" fill="#777"/><path d="M3.5 1.4 H9.4 L11.6 5.8 L9.4 10.2 H3.9 V7.6 L5.7 3.9 H3.5 Z" fill="#fff"/><path d="M6.9 7.7 H10.1 L8.55 4.8 Z" fill="#777"/></g></svg>
<svg class="a" style="left:869px;top:4px" width="11.2" height="9.6" viewBox="0 0 11.2 9.6"><path d="M0.6 2.6 H3 L4 0.6 H7.2 L8.2 2.6 H10.6 V9 H0.6 Z" fill="none" stroke="#7a7a7a" stroke-width="1.1" stroke-linejoin="round"/><circle cx="5.6" cy="5.6" r="2.1" fill="none" stroke="#7a7a7a" stroke-width="1.1"/></svg>
<svg class="a" style="left:891px;top:3.1px" width="10.8" height="10.8" viewBox="0 0 10.8 10.8"><rect x="0.5" y="0.5" width="9.8" height="9.8" rx="1" fill="none" stroke="#666" stroke-width="0.9"/><path d="M3.9 3.6 Q4 2.3 5.4 2.3 Q6.9 2.3 6.9 3.6 Q6.9 4.5 5.9 5 Q5.4 5.3 5.4 6.3 V6.9" fill="none" stroke="#444" stroke-width="0.8"/><rect x="5" y="7.8" width="0.9" height="0.9" fill="#444"/></svg>
<svg class="a" style="left:904.7px;top:6.9px" width="5" height="2.8" viewBox="0 0 5 2.8"><path d="M0 0 H5 L2.5 2.8 Z" fill="#555"/></svg>
<svg class="a" style="left:916.7px;top:4px" width="11" height="8.8" viewBox="0 0 11 8.8"><rect width="11" height="8.8" fill="#F5EDEF"/><rect y="0" width="11" height="1.1" fill="#EDD0D4"/><rect y="2.3" width="11" height="1.1" fill="#EDD0D4"/><rect y="4.6" width="11" height="1.1" fill="#EDD0D4"/><rect y="6.9" width="11" height="1.1" fill="#EDD0D4"/><rect width="5.8" height="4.2" fill="#9AA8C6"/></svg>
<svg class="a" style="left:930.5px;top:6.9px" width="5" height="2.8" viewBox="0 0 5 2.8"><path d="M0 0 H5 L2.5 2.8 Z" fill="#555"/></svg>
<svg class="a" style="left:946px;top:6.5px" width="8" height="4" viewBox="0 0 8 4"><path d="M0 2 H7.5" stroke="#555" stroke-width="1"/><rect x="4.3" y="0" width="1" height="4" fill="#555"/><rect x="5.3" y="1" width="2.2" height="2" fill="#555"/></svg>
<svg class="a" style="left:970.2px;top:7.4px" width="6.6" height="2.4" viewBox="0 0 6.6 2.4"><rect width="6.6" height="2.4" fill="#666"/></svg>
<svg class="a" style="left:993px;top:5.2px" width="7" height="6.4" viewBox="0 0 7 6.4"><rect x="2.3" y="0.5" width="4.2" height="4" fill="none" stroke="#666" stroke-width="1"/><rect x="0.5" y="2.2" width="4.2" height="4" fill="#EEEEF2" stroke="#666" stroke-width="1"/></svg>
<svg class="a" style="left:1015.9px;top:5.8px" width="5.9" height="5.7" viewBox="0 0 5.9 5.7"><path d="M0.3 0.3 L5.6 5.4 M5.6 0.3 L0.3 5.4" stroke="#666" stroke-width="1"/></svg>
<svg class="a" style="left:1014px;top:27px" width="10.4" height="10.4" viewBox="0 0 10.4 10.4"><circle cx="5.2" cy="5.2" r="5" fill="#EEEEF2"/><path d="M2.6 4 H7.9 L5.25 6.7 Z" fill="#111"/></svg>
<svg class="a" style="left:4.9px;top:48.9px" width="10.530000000000001" height="9.396" viewBox="0 0 10.530000000000001 9.396"><g transform="scale(0.81)"><path d="M3.1 0.1 H9.9 L13 5.8 L9.9 11.5 H3.1 L0 5.8 Z" fill="#111"/><path d="M3.5 1.4 H9.4 L11.6 5.8 L9.4 10.2 H3.9 V7.6 L5.7 3.9 H3.5 Z" fill="#fff"/><path d="M6.9 7.7 H10.1 L8.55 4.8 Z" fill="#111"/></g></svg>
<svg class="a" style="left:72.8px;top:50.2px" width="8.6" height="7.6" viewBox="0 0 8.6 7.6"><circle cx="3.2" cy="3.0" r="2.45" fill="none" stroke="#111" stroke-width="1.6"/><path d="M4.9 4.7 L7.9 7.2" stroke="#111" stroke-width="2"/></svg>
<svg class="a" style="left:120.9px;top:52.4px" width="4.5" height="2.6" viewBox="0 0 4.5 2.6"><path d="M0 0 H4.5 L2.25 2.6 Z" fill="#222"/></svg>
<svg class="a" style="left:155.6px;top:52.4px" width="4.5" height="2.6" viewBox="0 0 4.5 2.6"><path d="M0 0 H4.5 L2.25 2.6 Z" fill="#222"/></svg>
<svg class="a" style="left:165.3px;top:50.1px" width="9.5" height="7.4" viewBox="0 0 9.5 7.4"><rect x="0.5" y="0.5" width="8.5" height="5.4" rx="0.8" fill="#A8A8A8" stroke="#6a6a6a" stroke-width="1"/><rect x="2.8" y="6" width="4" height="1.3" fill="#333"/></svg>
<svg class="a" style="left:179.5px;top:52.2px" width="4.6" height="2.6" viewBox="0 0 4.6 2.6"><path d="M0 0 H4.6 L2.3 2.6 Z" fill="#222"/></svg>
<svg class="a" style="left:189.9px;top:49px" width="8.9" height="8.7" viewBox="0 0 8.9 8.7"><path d="M1.4 7.4 L7.4 1.3" stroke="#222" stroke-width="2.4"/><path d="M0.2 8.6 L0.8 6.8 L2.0 8.0 Z" fill="#222"/></svg>
<svg class="a" style="left:203.8px;top:52.2px" width="4.6" height="2.6" viewBox="0 0 4.6 2.6"><path d="M0 0 H4.6 L2.3 2.6 Z" fill="#222"/></svg>
<svg class="a" style="left:213.8px;top:49px" width="8.8" height="8.8" viewBox="0 0 8.8 8.8"><circle cx="3.4" cy="3.6" r="2.8" fill="none" stroke="#222" stroke-width="1.2"/><path d="M5.4 5.6 L8.4 8.5" stroke="#222" stroke-width="1.5"/><path d="M2 3.6 H4.8 M3.4 2.2 V5" stroke="#222" stroke-width="0.8"/></svg>
<svg class="a" style="left:231.1px;top:50.1px" width="8.8" height="7.8" viewBox="0 0 8.8 7.8"><path d="M0.8 0 V7 H8.8" fill="none" stroke="#222" stroke-width="1.4"/><path d="M2.2 6 L3.4 3.2 L4.6 5.4 L7.6 1.4" fill="none" stroke="#444" stroke-width="0.9"/></svg>
<svg class="a" style="left:248.8px;top:49.4px" width="8.5" height="8.5" viewBox="0 0 8.5 8.5"><path d="M4.25 0 V8.5 M0 4.25 H8.5" stroke="#111" stroke-width="2"/></svg>
<svg class="a" style="left:262.2px;top:52.2px" width="4.8" height="2.6" viewBox="0 0 4.8 2.6"><path d="M0 0 H4.8 L2.4 2.6 Z" fill="#222"/></svg>
<svg class="a" style="left:272.2px;top:50.1px" width="8.9" height="7.6" viewBox="0 0 8.9 7.6"><rect x="0.5" y="1.7" width="6.8" height="5.4" fill="#ddd" stroke="#777" stroke-width="1"/><rect x="1.6" y="0.5" width="6.8" height="5.4" fill="#F3F3F6" stroke="#777" stroke-width="1"/></svg>
<svg class="a" style="left:286.2px;top:52.2px" width="4.8" height="2.6" viewBox="0 0 4.8 2.6"><path d="M0 0 H4.8 L2.4 2.6 Z" fill="#222"/></svg>
<svg class="a" style="left:896.7px;top:51px" width="7" height="6.8" viewBox="0 0 7 6.8"><path d="M0.5 6.5 L6.5 0.5" stroke="#777" stroke-width="1"/><path d="M1.5 2 L5.5 5.5 M3 1 L4.5 3 M2.5 4 L4 6" stroke="#888" stroke-width="0.9"/></svg>
<svg class="a" style="left:909.4px;top:52.8px" width="5.2" height="2.7" viewBox="0 0 5.2 2.7"><path d="M0 0 H5.2 L2.6 2.7 Z" fill="#222"/></svg>
<svg class="a" style="left:919.9px;top:50.1px" width="9.2" height="7.9" viewBox="0 0 9.2 7.9"><path d="M0.6 2.4 H2.6 L3.6 0.6 H5.8 L6.7 2.4 H8.6 V7.3 H0.6 Z" fill="none" stroke="#666" stroke-width="1" stroke-linejoin="round"/><circle cx="4.6" cy="4.7" r="1.7" fill="none" stroke="#666" stroke-width="1"/></svg>
<svg class="a" style="left:935.7px;top:48.7px" width="11.8" height="11" viewBox="0 0 11.8 11"><path d="M1.5 1.5 L4.6 4.4 M10.3 1.5 L7.2 4.4 M1.5 9.5 L4.6 6.6 M10.3 9.5 L7.2 6.6" stroke="#111" stroke-width="1.6"/><path d="M0 0 H4 L0 3.8 Z M11.8 0 H7.8 L11.8 3.8 Z M0 11 H4 L0 7.2 Z M11.8 11 H7.8 L11.8 7.2 Z" fill="#111"/></svg>
<svg class="a" style="left:953.7px;top:49px" width="9.8" height="9.8" viewBox="0 0 9.8 9.8"><circle cx="4.9" cy="4.9" r="4.4" fill="none" stroke="#B0B0B0" stroke-width="1"/></svg>
<svg class="a" style="left:967.9px;top:53.1px" width="5" height="2.5" viewBox="0 0 5 2.5"><path d="M0 0 H5 L2.5 2.5 Z" fill="#222"/></svg>
<svg class="a" style="left:978.7px;top:51px" width="8.6" height="7" viewBox="0 0 8.6 7"><path d="M0.8 6.4 L7 0.8 M1.5 1 L7.5 6.5" stroke="#222" stroke-width="1.6"/><path d="M5.5 0 L8.6 1.5 L7.2 3 Z" fill="#222"/></svg>
<svg class="a" style="left:999.1px;top:50.1px" width="4.8" height="7.8" viewBox="0 0 4.8 7.8"><rect x="1" y="0.4" width="2.8" height="3.6" fill="none" stroke="#222" stroke-width="1"/><rect x="0" y="3.8" width="4.8" height="1" fill="#222"/><rect x="2" y="4.8" width="0.9" height="3" fill="#222"/></svg>
<svg class="a" style="left:1015.7px;top:51.8px" width="6.2" height="5.2" viewBox="0 0 6.2 5.2"><path d="M0.4 0.3 L5.8 4.9 M5.8 0.3 L0.4 4.9" stroke="#111" stroke-width="1.2"/></svg>
<svg class="a" style="left:961.2px;top:65.1px" width="11.3" height="10.6" viewBox="0 0 11.3 10.6"><rect x="0.5" y="0.5" width="10.3" height="9.6" fill="#fff" stroke="#555" stroke-width="1"/><path d="M3 2.5 L6.6 5.3 L3 8.1 Z" fill="#111"/><rect x="6.6" y="2.5" width="1.3" height="5.6" fill="#111"/></svg>
<svg class="a" style="left:1018.2px;top:65.1px" width="6.6" height="6.6" viewBox="0 0 6.6 6.6"><rect x="0.5" y="0.5" width="5.6" height="5.6" fill="#fff" stroke="#555" stroke-width="1"/><path d="M1.6 1.6 H4.8 L1.6 4.8 Z" fill="#666"/></svg>
<svg class="a" style="left:5.9px;top:502px" width="2.8" height="4.3" viewBox="0 0 2.8 4.3"><path d="M2.8 0 V4.3 L0 2.15 Z" fill="#222"/></svg>
<svg class="a" style="left:905.5px;top:501.4px" width="5.1" height="5.8" viewBox="0 0 5.1 5.8"><rect width="5.1" height="5.8" fill="#C8CAD8"/></svg>
<svg class="a" style="left:915.7px;top:502px" width="2.9" height="4" viewBox="0 0 2.9 4"><path d="M0 0 V4 L2.9 2 Z" fill="#222"/></svg>
<svg class="a" style="left:420.2px;top:516.2px" width="10.5" height="10.2" viewBox="0 0 10.5 10.2"><path d="M5.25 0 V10.2 M0 5.1 H10.5" stroke="#222" stroke-width="1"/></svg>
<svg class="a" style="left:85px;top:538px" width="4.7" height="2.6" viewBox="0 0 4.7 2.6"><path d="M0 0 H4.7 L2.35 2.6 Z" fill="#222"/></svg>
<svg class="a" style="left:1021px;top:538px" width="7" height="7" viewBox="0 0 7 7"><path d="M6.5 1 V6.5 H1 Z" fill="none"/><path d="M6 2 L2 6 M6 4 L4 6" stroke="#888" stroke-width="0.8"/><rect x="5" y="5" width="1" height="1" fill="#888"/></svg>
</body></html>
